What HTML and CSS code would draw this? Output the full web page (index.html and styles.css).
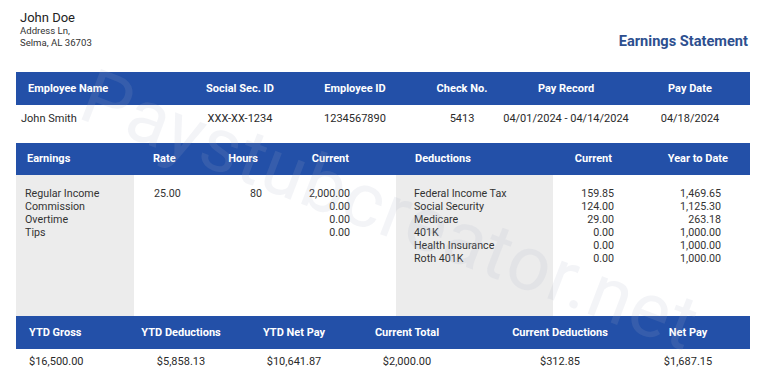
FILE: index.html
```html
<!DOCTYPE html>
<html>
<head>
<meta charset="utf-8">
<link rel="stylesheet" href="styles.css">
</head>
<body>
<div class="page">
  <div class="top">
    <div class="addr">
      <div class="name">John Doe</div>
      <div class="line">Address Ln,</div>
      <div class="line">Selma, AL 36703</div>
    </div>
    <div class="title">Earnings Statement</div>
  </div>

  <div class="sec1">
    <div class="row1 head">
      <div class="c1">Employee Name</div>
      <div class="cc">Social Sec. ID</div>
      <div class="cc">Employee ID</div>
      <div class="cc">Check No.</div>
      <div class="cc">Pay Record</div>
      <div class="cc last">Pay Date</div>
    </div>
    <div class="row1 data">
      <div class="c1 d">John Smith</div>
      <div class="cc">XXX-XX-1234</div>
      <div class="cc">1234567890</div>
      <div class="cc">5413</div>
      <div class="cc"><span>04/01/2024 - 04/14/2024</span></div>
      <div class="cc last">04/18/2024</div>
    </div>
  </div>

  <div class="sec2">
    <div class="row2 head">
      <div class="e-lab">Earnings</div>
      <div class="e-rate">Rate</div>
      <div class="e-hrs hh">Hours</div>
      <div class="e-cur">Current</div>
      <div class="sp"></div>
      <div class="d-lab">Deductions</div>
      <div class="d-cur hc">Current</div>
      <div class="d-ytd hy">Year to Date</div>
    </div>
    <div class="row2 body">
      <div class="e-lab gray">
        <div>Regular Income</div><div>Commission</div><div>Overtime</div><div>Tips</div>
      </div>
      <div class="e-rate"><div>25.00</div></div>
      <div class="e-hrs"><div>80</div></div>
      <div class="e-cur">
        <div>2,000.00</div><div>0.00</div><div>0.00</div><div>0.00</div>
      </div>
      <div class="sp"></div>
      <div class="d-lab gray">
        <div>Federal Income Tax</div><div>Social Security</div><div>Medicare</div><div>401K</div><div>Health Insurance</div><div>Roth 401K</div>
      </div>
      <div class="d-cur">
        <div>159.85</div><div>124.00</div><div>29.00</div><div>0.00</div><div>0.00</div><div>0.00</div>
      </div>
      <div class="d-ytd">
        <div>1,469.65</div><div>1,125.30</div><div>263.18</div><div>1,000.00</div><div>1,000.00</div><div>1,000.00</div>
      </div>
    </div>
  </div>

  <div class="sec3">
    <div class="row3 head">
      <div class="t1">YTD Gross</div>
      <div class="tc">YTD Deductions</div>
      <div class="tc">YTD Net Pay</div>
      <div class="tc">Current Total</div>
      <div class="tc t5">Current Deductions</div>
      <div class="tc">Net Pay</div>
    </div>
    <div class="row3 data">
      <div class="t1">$16,500.00</div>
      <div class="tc">$5,858.13</div>
      <div class="tc">$10,641.87</div>
      <div class="tc">$2,000.00</div>
      <div class="tc t5">$312.85</div>
      <div class="tc">$1,687.15</div>
    </div>
  </div>

  <div class="watermark">Paystubcreator.net</div>
</div>
</body>
</html>
```

FILE: styles.css
```css
* { box-sizing: border-box; }
html, body { margin: 0; padding: 0; background: #fff; }
body {
  font-family: Roboto, "Liberation Sans", sans-serif;
  color: #2a2a2a;
  width: 780px;
  height: 388px;
  overflow: hidden;
}
.page {
  position: relative;
  width: 780px;
  height: 388px;
  padding: 10px 30px 0 16px;
}
.top {
  display: flex;
  justify-content: space-between;
  align-items: flex-end;
  padding-left: 4px;
}
.name { font-size: 13px; line-height: 15px; color: #222; }
.line { font-size: 9.6px; line-height: 12px; color: #333; }
.title {
  font-size: 14.6px;
  line-height: 16px;
  font-weight: 700;
  color: #2d4f8f;
  margin-right: 2px;
}
.head {
  background: #2350a8;
  color: #fff;
  font-weight: 700;
  font-size: 11px;
  white-space: nowrap;
}
.sec1 { margin-top: 23px; }
.row1 {
  display: grid;
  grid-template-columns: 166px 116px 114px 100px 108px 130px;
  font-size: 11px;
  white-space: nowrap;
}
.row1.head { height: 33px; line-height: 33px; }
.row1.data { height: 28px; line-height: 28px; margin-bottom: 10px; color: #2a2a2a; }
.row1 .c1 { padding-left: 12px; }
.row1 .c1.d { padding-left: 5px; }
.row1 .cc { display: flex; justify-content: center; }
.row1 .last { padding-left: 10px; }

.row2 {
  display: grid;
  grid-template-columns: 118px 66px 62px 88px 46px 157px 61px 136px;
}
.row2.head { height: 32px; line-height: 32px; }
.row2.head .e-lab { padding-left: 11px; }
.row2.head .e-rate { padding-left: 19px; }
.row2.head .e-hrs { text-align: right; padding-right: 4px; }
.row2.head .e-cur { text-align: right; padding-right: 1px; }
.row2.head .d-lab { padding-left: 19px; }
.row2.head .d-cur { text-align: right; padding-right: 2px; }
.row2.head .d-ytd { text-align: right; padding-right: 22px; }
.row2.body {
  height: 141px;
  font-size: 10.7px;
  line-height: 13px;
  color: #333;
  white-space: nowrap;
}
.row2.body > div { padding-top: 12px; }
.row2.body .gray { background: #ececec; }
.row2.body .e-lab { padding-left: 9px; }
.row2.body .e-rate { padding-left: 20px; }
.row2.body .e-hrs { text-align: right; }
.row2.body .e-cur { text-align: right; }
.row2.body .d-lab { padding-left: 18px; }
.row2.body .d-cur { text-align: right; }
.row2.body .d-ytd { text-align: right; padding-right: 29px; }

.row3 {
  display: grid;
  grid-template-columns: 109px 112px 114px 112px 163px 124px;
  font-size: 11px;
  white-space: nowrap;
}
.row3.head { height: 33px; line-height: 33px; }
.row3.data { height: 26px; line-height: 26px; color: #2a2a2a; }
.row3 .t1 { padding-left: 13px; }
.row3 .tc { text-align: center; }
.row3 .t5 { padding-left: 31px; }

.watermark {
  position: absolute;
  left: 390px;
  top: 210px;
  transform: translate(-50%, -50%) rotate(21deg);
  font-size: 76px;
  line-height: 80px;
  font-weight: 400;
  letter-spacing: 1px;
  white-space: nowrap;
  color: rgba(170, 180, 195, 0.14);
  pointer-events: none;
}
```
